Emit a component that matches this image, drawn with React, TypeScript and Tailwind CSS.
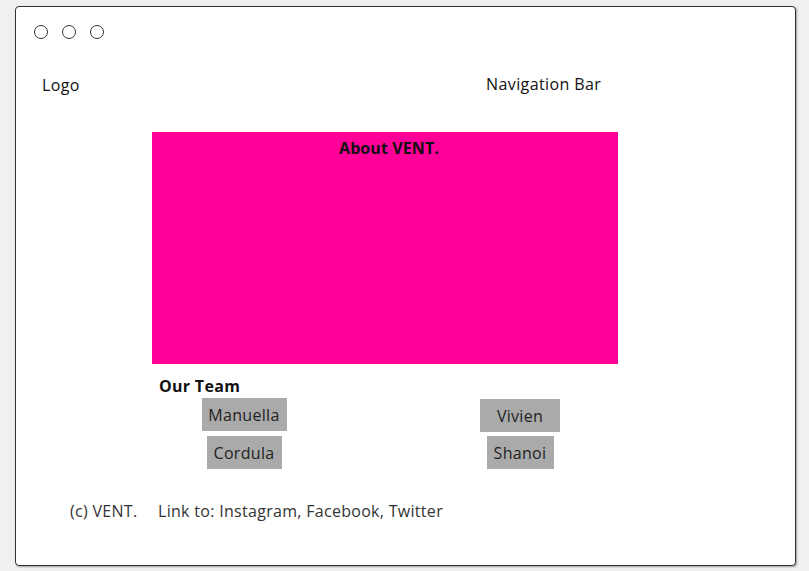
const font = { fontFamily: '"Open Sans", "Liberation Sans", sans-serif' }

function Member({ name, className }: { name: string; className: string }) {
  return (
    <div className={`bg-[#aaaaaa] h-[33px] flex items-center justify-center text-[16px] tracking-[0.3px] text-[#222] ${className}`}>
      {name}
    </div>
  )
}

export default function App() {
  return (
    <div className="w-[809px] h-[571px] bg-[#f0f0f0] pt-[6px] pl-[15px]" style={font}>
      <div className="w-[781px] h-[560px] bg-white border-[1.5px] border-[#333] rounded-[4px] shadow-[1px_1px_2px_rgba(0,0,0,0.35)] flex flex-col">
        {/* window controls */}
        <div className="flex gap-[14px] pl-[18px] pt-[18px]">
          <span className="w-[14px] h-[14px] rounded-full border-[1.5px] border-[#333]" />
          <span className="w-[14px] h-[14px] rounded-full border-[1.5px] border-[#333]" />
          <span className="w-[14px] h-[14px] rounded-full border-[1.5px] border-[#333]" />
        </div>

        {/* header */}
        <div className="flex items-center pt-[34px] text-[16px] tracking-[0.4px] text-[#111]">
          <span className="pl-[26px] w-[470px]">Logo</span>
          <span className="-mt-[2px]">Navigation Bar</span>
        </div>

        {/* about */}
        <div className="ml-[136px] mt-[35px] w-[466px] h-[232px] bg-[#ff0099] flex justify-center pt-[4px] pl-[8px]">
          <h2 className="font-bold text-[16px] tracking-[0.1px] text-[#111] h-fit">About VENT.</h2>
        </div>

        {/* team */}
        <div className="ml-[143px] mt-[12px]">
          <h3 className="font-bold text-[16px] tracking-[0.3px] text-[#111] leading-[20px]">Our Team</h3>
          <div className="flex">
            <div className="w-[170px] flex flex-col items-center gap-[5px] pt-[2px]">
              <Member name="Manuella" className="w-[85px]" />
              <Member name="Cordula" className="w-[75px]" />
            </div>
            <div className="w-[380px] flex flex-col items-center gap-[4px] pt-[3px] pl-[2px]">
              <Member name="Vivien" className="w-[80px]" />
              <Member name="Shanoi" className="w-[67px]" />
            </div>
          </div>
        </div>

        {/* footer */}
        <div className="flex pl-[54px] mt-[30px] text-[16px] tracking-[0.3px] text-[#333]">
          <span className="w-[88px]">(c) VENT.</span>
          <span>Link to: Instagram, Facebook, Twitter</span>
        </div>
      </div>
    </div>
  )
}
